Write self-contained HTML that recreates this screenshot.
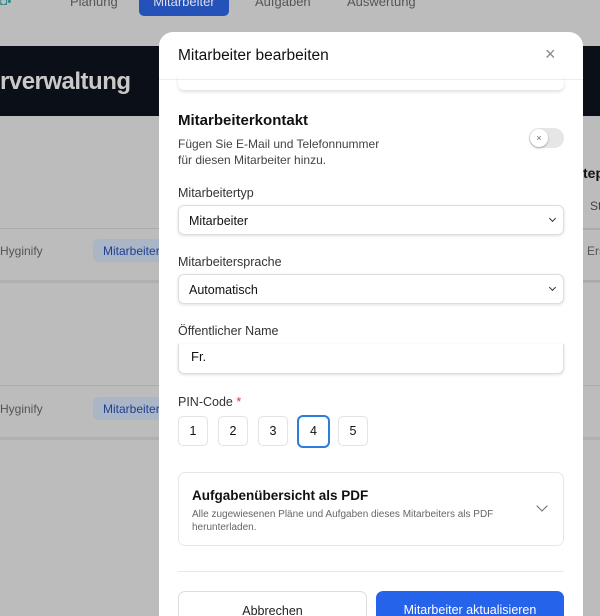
<!DOCTYPE html>
<html style="width:600px;height:616px;overflow:hidden"><head><meta charset="utf-8"><style>
*{box-sizing:border-box;margin:0;padding:0}
body{width:600px;height:616px;overflow:hidden;background:#bcbcbc;font-family:"Liberation Sans",sans-serif;position:relative;color:#111}
.a{position:absolute}
.nav{font-size:13px;color:#555;top:-6px}
.modal{left:159px;top:32px;width:424px;height:584px;background:#fff;border-radius:14px 14px 0 0;overflow:hidden}
.lbl{font-size:12.5px;color:#333;position:absolute;left:19px}
.sel{position:absolute;left:19px;width:386px;height:30px;border:1px solid #ddd;border-radius:6px;box-shadow:0 1px 3px rgba(0,0,0,.12);font-size:12.5px;padding:8px 10px;color:#111}
.dd:after{content:"";position:absolute;right:8px;top:10px;width:4px;height:4px;border-right:1.5px solid #333;border-bottom:1.5px solid #333;transform:rotate(45deg)}
.pin{position:absolute;top:416px;width:30px;height:30px;border:1px solid #e3e3e3;border-radius:5px;font-size:12.5px;text-align:center;line-height:28px}
</style></head><body>
<div class="a" style="left:0;top:-6px;width:22px;height:18px;color:#3a8a8a;font-size:12px">◘▪</div>
<div class="a nav" style="left:70px">Planung</div>
<div class="a" style="left:139px;top:-10px;width:90px;height:26px;background:#2452b8;border-radius:5px;color:#dde;font-size:13px;text-align:center;line-height:24px">Mitarbeiter</div>
<div class="a nav" style="left:255px">Aufgaben</div>
<div class="a nav" style="left:347px">Auswertung</div>
<div class="a" style="left:0;top:46px;width:600px;height:70px;background:#0b0f17"></div>
<div class="a" style="left:0;top:68px;font-size:24px;font-weight:bold;color:#c9c9c9;letter-spacing:-.5px">rverwaltung</div>
<div class="a" style="left:0;top:228px;width:600px;height:1px;background:#ababab"></div>
<div class="a" style="left:0;top:280px;width:600px;height:3px;background:#b0b0b0"></div>
<div class="a" style="left:0;top:385px;width:600px;height:1px;background:#ababab"></div>
<div class="a" style="left:0;top:437px;width:600px;height:3px;background:#b0b0b0"></div>
<div class="a" style="left:0;top:244px;font-size:12px;color:#555">Hyginify</div>
<div class="a" style="left:0;top:402px;font-size:12px;color:#555">Hyginify</div>
<div class="a" style="left:93px;top:239px;width:70px;height:23px;background:#aab6c6;border-radius:5px;color:#1f3f8f;font-size:12px;padding:5px 10px">Mitarbeiter</div>
<div class="a" style="left:93px;top:397px;width:70px;height:23px;background:#aab6c6;border-radius:5px;color:#1f3f8f;font-size:12px;padding:5px 10px">Mitarbeiter</div>
<div class="a" style="left:154px;top:168px;font-size:12px;color:#444;font-weight:bold">⋮</div>
<div class="a" style="left:154px;top:325px;font-size:12px;color:#444;font-weight:bold">⋮</div>
<div class="a" style="left:583px;top:165px;font-size:14px;font-weight:bold;color:#111">tep</div>
<div class="a" style="left:590px;top:199px;font-size:12px;color:#444">St</div>
<div class="a" style="left:583px;top:229px;width:17px;height:1px;background:#aaa"></div>
<div class="a" style="left:587px;top:244px;font-size:12px;color:#555">Ers</div>
<div class="a" style="left:583px;top:280px;width:17px;height:2px;background:#aaa"></div>

<div class="a modal">
 <div class="a" style="left:19px;top:15px;font-size:15.5px;color:#111">Mitarbeiter bearbeiten</div>
 <div class="a" style="left:386px;top:12px;font-size:18px;color:#888">×</div>
 <div class="a" style="left:0;top:47px;width:424px;height:1px;background:#eee"></div>
 <div class="a" style="left:19px;top:44px;width:386px;height:14px;border-radius:0 0 6px 6px;box-shadow:0 2px 3px rgba(0,0,0,.12)"></div>
 <div class="a" style="left:19px;top:80px;font-size:15px;font-weight:bold">Mitarbeiterkontakt</div>
 <div class="a" style="left:19px;top:104px;font-size:12px;color:#444;line-height:16px">Fügen Sie E-Mail und Telefonnummer<br>für diesen Mitarbeiter hinzu.</div>
 <div class="a" style="left:370px;top:96px;width:35px;height:20px;border-radius:10px;background:#e6e6e6"><div class="a" style="left:1px;top:1px;width:18px;height:18px;border-radius:50%;background:#fff;box-shadow:0 1px 2px rgba(0,0,0,.3);font-size:9px;text-align:center;line-height:18px;color:#666">×</div></div>
 <div class="lbl" style="top:154px">Mitarbeitertyp</div>
 <div class="sel dd" style="top:173px">Mitarbeiter</div>
 <div class="lbl" style="top:223px">Mitarbeitersprache</div>
 <div class="sel dd" style="top:242px">Automatisch</div>
 <div class="lbl" style="top:292px">Öffentlicher Name</div>
 <div class="sel" style="top:312px;border-top:none;border-radius:0 0 6px 6px;padding:5px 12px;font-size:13px">Fr.</div>
 <div class="lbl" style="top:363px">PIN-Code <span style="color:#d33">*</span></div>
</div>
<div class="pin" style="left:178px">1</div>
<div class="pin" style="left:218px">2</div>
<div class="pin" style="left:258px">3</div>
<div class="pin" style="left:297px;top:415px;width:33px;height:33px;border:2px solid #2a7de1;border-radius:6px;line-height:29px">4</div>
<div class="pin" style="left:338px">5</div>
<div class="a" style="left:178px;top:472px;width:386px;height:74px;border:1px solid #e6e6e6;border-radius:7px">
 <div class="a" style="left:13px;top:15px;font-size:13.5px;font-weight:bold">Aufgabenübersicht als PDF</div>
 <div class="a" style="left:13px;top:35px;font-size:10px;color:#666;line-height:13px">Alle zugewiesenen Pläne und Aufgaben dieses Mitarbeiters als PDF<br>herunterladen.</div>
 <div class="a" style="left:359px;top:29px;width:8px;height:8px;border-right:1.3px solid #666;border-bottom:1.3px solid #666;transform:rotate(45deg)"></div>
</div>
<div class="a" style="left:178px;top:571px;width:386px;height:1px;background:#e8e8e8"></div>
<div class="a" style="left:178px;top:591px;width:189px;height:40px;border:1px solid #ddd;border-radius:7px;text-align:center;padding-top:12px;font-size:12.5px;color:#222">Abbrechen</div>
<div class="a" style="left:376px;top:591px;width:188px;height:40px;background:#2563eb;border-radius:7px;text-align:center;padding-top:12px;font-size:12.5px;color:#fff">Mitarbeiter aktualisieren</div>
</body></html>
